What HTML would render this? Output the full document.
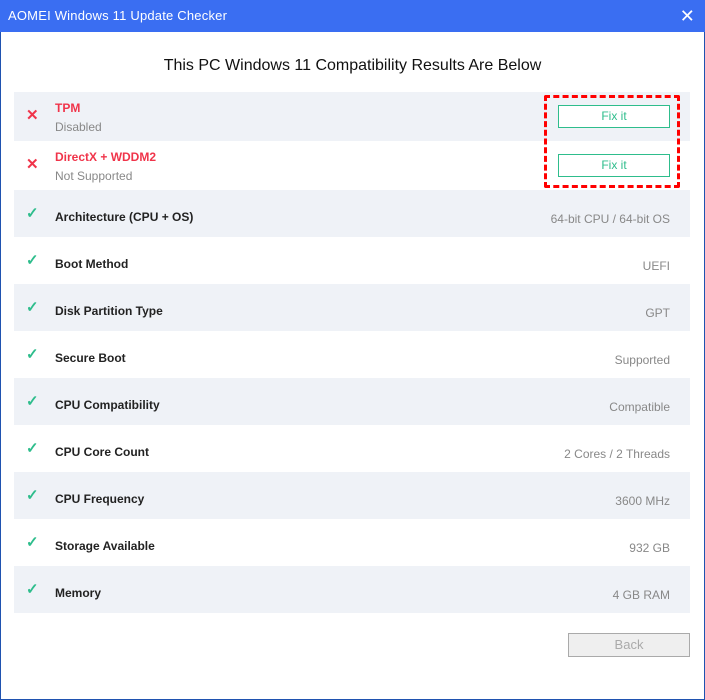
<!DOCTYPE html><html><head><style>
*{margin:0;padding:0;box-sizing:border-box}
body{width:705px;height:700px;background:#fff;font-family:"Liberation Sans",sans-serif;position:relative;overflow:hidden}
.win{position:absolute;left:0;top:0;width:705px;height:700px;border:1px solid #1f52b0;border-top:none}
.tb{position:absolute;left:0;top:0;width:705px;height:32px;background:#3a6ef2;color:#fff;font-size:13px;line-height:32px;padding-left:8px;letter-spacing:0.2px}
.x{position:absolute;right:10px;top:0;font-size:18px;color:#fff;line-height:32px}
h1{position:absolute;top:57px;left:0;width:705px;text-align:center;font-weight:normal;font-size:16px;color:#111}
.row{position:absolute;left:14px;width:676px}
.g{background:#eff2f7}
.ic{position:absolute;left:12px;font-size:15px}
.ok{color:#2ebd8c;font-weight:bold}
.bad{color:#f0344a;font-weight:bold}
.n{position:absolute;left:41px;font-size:12px;font-weight:bold;color:#222}
.v{position:absolute;right:20px;font-size:12px;color:#888}
.fix{position:absolute;left:558px;width:112px;height:23px;border:1px solid #2ebd8c;color:#2ebd8c;font-size:12px;text-align:center;line-height:21px;background:#fff}
</style></head><body>
<div class="win"></div>
<div class="tb">AOMEI Windows 11 Update Checker<span class="x">✕</span></div>
<h1>This PC Windows 11 Compatibility Results Are Below</h1>
<div class="row g" style="top:92px;height:49px"><span class="ic bad" style="top:14px">✕</span><span style="position:absolute;left:41px;top:9px;font-size:12px;color:#f0344a;font-weight:bold">TPM</span><span style="position:absolute;left:41px;top:28px;font-size:12px;color:#888">Disabled</span></div>
<div class="row" style="top:141px;height:49px"><span class="ic bad" style="top:14px">✕</span><span style="position:absolute;left:41px;top:9px;font-size:12px;color:#f0344a;font-weight:bold">DirectX + WDDM2</span><span style="position:absolute;left:41px;top:28px;font-size:12px;color:#888">Not Supported</span></div>
<div class="fix" style="top:105px">Fix it</div>
<div class="fix" style="top:154px">Fix it</div>
<div style="position:absolute;left:544px;top:95px;width:136px;height:93px;border:3px dashed #f00;border-radius:2px"></div>
<div class="row g" style="top:190px;height:47px"><span class="ic ok" style="top:14px">✓</span><span class="n" style="top:20px">Architecture (CPU + OS)</span><span class="v" style="top:22px">64-bit CPU / 64-bit OS</span></div>
<div class="row" style="top:237px;height:47px"><span class="ic ok" style="top:14px">✓</span><span class="n" style="top:20px">Boot Method</span><span class="v" style="top:22px">UEFI</span></div>
<div class="row g" style="top:284px;height:47px"><span class="ic ok" style="top:14px">✓</span><span class="n" style="top:20px">Disk Partition Type</span><span class="v" style="top:22px">GPT</span></div>
<div class="row" style="top:331px;height:47px"><span class="ic ok" style="top:14px">✓</span><span class="n" style="top:20px">Secure Boot</span><span class="v" style="top:22px">Supported</span></div>
<div class="row g" style="top:378px;height:47px"><span class="ic ok" style="top:14px">✓</span><span class="n" style="top:20px">CPU Compatibility</span><span class="v" style="top:22px">Compatible</span></div>
<div class="row" style="top:425px;height:47px"><span class="ic ok" style="top:14px">✓</span><span class="n" style="top:20px">CPU Core Count</span><span class="v" style="top:22px">2 Cores / 2 Threads</span></div>
<div class="row g" style="top:472px;height:47px"><span class="ic ok" style="top:14px">✓</span><span class="n" style="top:20px">CPU Frequency</span><span class="v" style="top:22px">3600 MHz</span></div>
<div class="row" style="top:519px;height:47px"><span class="ic ok" style="top:14px">✓</span><span class="n" style="top:20px">Storage Available</span><span class="v" style="top:22px">932 GB</span></div>
<div class="row g" style="top:566px;height:47px"><span class="ic ok" style="top:14px">✓</span><span class="n" style="top:20px">Memory</span><span class="v" style="top:22px">4 GB RAM</span></div>
<div style="position:absolute;left:568px;top:633px;width:122px;height:24px;border:1px solid #aaa;background:#efefef;color:#aaa;font-size:13px;text-align:center;line-height:22px">Back</div>
</body></html>
